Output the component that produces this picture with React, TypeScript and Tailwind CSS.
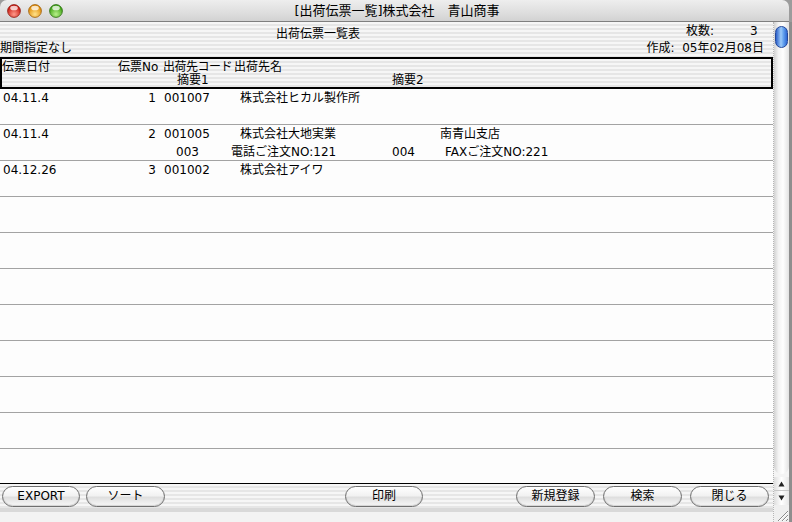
import React from "react";

type Slip = {
  date: string;
  no: string;
  code: string;
  name: string;
  branch?: string;
  memo?: [string, string, string, string];
};

const slips: Slip[] = [
  { date: "04.11.4", no: "1", code: "001007", name: "株式会社ヒカル製作所" },
  {
    date: "04.11.4",
    no: "2",
    code: "001005",
    name: "株式会社大地実業",
    branch: "南青山支店",
    memo: ["003", "電話ご注文NO:121", "004", "FAXご注文NO:221"],
  },
  { date: "04.12.26", no: "3", code: "001002", name: "株式会社アイワ" },
];

// aqua pinstripe background used on the window body
const stripes =
  "bg-[repeating-linear-gradient(to_bottom,#f6f6f6_0px,#f6f6f6_2px,#e6e6e6_2px,#e6e6e6_4px)]";

const Light = ({ id, hi, lo, edge }: { id: string; hi: string; lo: string; edge: string }) => (
  <svg width="14" height="14" viewBox="0 0 14 14">
    <defs>
      <radialGradient id={id} cx="50%" cy="75%" r="65%">
        <stop offset="0" stopColor={hi} />
        <stop offset="1" stopColor={lo} />
      </radialGradient>
    </defs>
    <circle cx="7" cy="7" r="6.4" fill={`url(#${id})`} stroke={edge} strokeWidth="0.8" />
    <ellipse cx="7" cy="4" rx="3.8" ry="2.3" fill="#ffffff" opacity="0.75" />
  </svg>
);

const PillButton = ({ label, className }: { label: string; className: string }) => (
  <button
    className={`h-[21px] rounded-full border border-[#6f6f6f] bg-[linear-gradient(to_bottom,#ffffff,#f2f2f2_45%,#dfdfdf_55%,#f8f8f8)] text-[12px] leading-[19px] text-black shadow-[inset_0_-1px_1px_rgba(0,0,0,0.15)] ${className}`}
  >
    {label}
  </button>
);

const SlipRow = ({ slip }: { slip?: Slip }) => (
  <div className="h-[36px] shrink-0 whitespace-nowrap border-b border-[#a3a3a3]">
    {slip && (
      <>
        <div className="flex h-[18px] items-center leading-[18px]">
          <span className="w-[113px] shrink-0 pl-[3px]">{slip.date}</span>
          <span className="w-[43px] shrink-0 text-right">{slip.no}</span>
          <span className="ml-[8px] w-[76px] shrink-0">{slip.code}</span>
          <span className="w-[200px] shrink-0">{slip.name}</span>
          <span>{slip.branch}</span>
        </div>
        {slip.memo && (
          <div className="flex h-[18px] items-center leading-[18px]">
            <span className="ml-[176px] w-[55px] shrink-0">{slip.memo[0]}</span>
            <span className="w-[161px] shrink-0">{slip.memo[1]}</span>
            <span className="w-[53px] shrink-0">{slip.memo[2]}</span>
            <span>{slip.memo[3]}</span>
          </div>
        )}
      </>
    )}
  </div>
);

export default function App() {
  const empty = Array.from({ length: 7 });

  return (
    <div className="flex h-[522px] w-[792px] flex-col overflow-hidden bg-[#9c9c9c] font-['DejaVu_Sans','Noto_Sans_CJK_JP',sans-serif] text-[12px] text-black">
      {/* title bar */}
      <div className="mr-[3px] flex h-[22px] shrink-0 items-center rounded-t-[7px] border-b border-[#7f7f7f] bg-[linear-gradient(to_bottom,#eeeeee,#dedede_60%,#d2d2d2)]">
        <div className="ml-[7px] flex gap-[7px]">
          <Light id="red" hi="#ff9a8a" lo="#c8140c" edge="#8a1a12" />
          <Light id="amber" hi="#ffe28a" lo="#e08a00" edge="#9a5a08" />
          <Light id="green" hi="#b8f08a" lo="#3aa010" edge="#2a6a10" />
        </div>
        <div className="flex-1 pr-[58px] text-center text-[13px] leading-[22px]">
          [出荷伝票一覧]株式会社　青山商事
        </div>
      </div>

      <div className="flex min-h-0 flex-1">
        {/* layout area */}
        <div className="flex w-[773px] flex-col bg-[#fdfdfd]">
          <div className={`h-[35px] shrink-0 whitespace-nowrap ${stripes}`}>
            <div className="flex h-[19px] items-start">
              <span className="ml-[276px] mt-[5px] leading-[14px]">出荷伝票一覧表</span>
              <span className="ml-[326px] mt-[2px] leading-[14px]">枚数:</span>
              <span className="ml-[36px] mt-[2px] leading-[14px]">3</span>
            </div>
            <div className="flex h-[16px] items-start leading-[14px]">
              <span>期間指定なし</span>
              <span className="ml-auto mr-[9px]">作成:&nbsp;&nbsp;05年02月08日</span>
            </div>
          </div>

          {/* column headings */}
          <div className={`h-[32px] shrink-0 whitespace-nowrap border-2 border-black pt-[2px] leading-[13px] ${stripes}`}>
            <div className="flex">
              <span className="w-[116px] shrink-0">伝票日付</span>
              <span className="w-[45px] shrink-0">伝票No</span>
              <span className="w-[71px] shrink-0 tracking-[-0.5px]">出荷先コード</span>
              <span>出荷先名</span>
            </div>
            <div className="flex">
              <span className="ml-[175px] w-[215px] shrink-0">摘要1</span>
              <span>摘要2</span>
            </div>
          </div>

          <div className="flex min-h-0 flex-1 flex-col">
            {slips.map((s, i) => (
              <SlipRow key={i} slip={s} />
            ))}
            {empty.map((_, i) => (
              <SlipRow key={`e${i}`} />
            ))}
          </div>

          {/* button strip */}
          <div className={`flex h-[25px] shrink-0 items-center border-t border-black ${stripes}`}>
            <PillButton label="EXPORT" className="ml-[2px] w-[78px]" />
            <PillButton label="ソート" className="ml-[6px] w-[79px]" />
            <PillButton label="印刷" className="ml-[180px] w-[78px]" />
            <PillButton label="新規登録" className="ml-[93px] w-[79px]" />
            <PillButton label="検索" className="ml-[8px] w-[79px]" />
            <PillButton label="閉じる" className="ml-[8px] w-[79px]" />
          </div>
          <div className="h-[4px] shrink-0 bg-[#d9d9d9]" />
          <div className="h-[10px] shrink-0 bg-[#f3f3f3]" />
        </div>

        {/* scroller */}
        <div className="flex w-[16px] flex-col border-l border-dotted border-[#b5b5b5] bg-[#f4f4f4]">
          <div className="flex flex-1 flex-col rounded-b-[8px] bg-[linear-gradient(to_right,#d2d2d2,#f3f3f3_30%,#ffffff_60%,#e2e2e2)]">
            <div className="mx-[1px] mt-[4px] h-[22px] rounded-full border border-[#24489a] bg-[linear-gradient(to_right,#2b5fc9,#9ccaf9_45%,#5f9ded_70%,#2d67d4)]" />
          </div>
          <div className="mt-[3px] flex h-[14px] items-center justify-center border-b border-[#c8c8c8] bg-[linear-gradient(to_right,#dedede,#ffffff_50%,#e6e6e6)]">
            <svg width="7" height="6" viewBox="0 0 7 6">
              <path d="M3.5 0.5 L6.5 5.5 L0.5 5.5 Z" fill="#222" />
            </svg>
          </div>
          <div className="flex h-[14px] items-center justify-center bg-[linear-gradient(to_right,#dedede,#ffffff_50%,#e6e6e6)]">
            <svg width="7" height="6" viewBox="0 0 7 6">
              <path d="M0.5 0.5 L6.5 0.5 L3.5 5.5 Z" fill="#222" />
            </svg>
          </div>
          <div className="flex h-[17px] items-end justify-end bg-[#efefef]">
            <svg width="14" height="14" viewBox="0 0 14 14">
              <path d="M13 3 L3 13 M13 7 L7 13 M13 11 L11 13" stroke="#8a8a8a" strokeWidth="1" />
              <path d="M13 4 L4 13 M13 8 L8 13" stroke="#ffffff" strokeWidth="1" />
            </svg>
          </div>
        </div>
        <div className="w-[3px] bg-[#8e8e8e]" />
      </div>
    </div>
  );
}
